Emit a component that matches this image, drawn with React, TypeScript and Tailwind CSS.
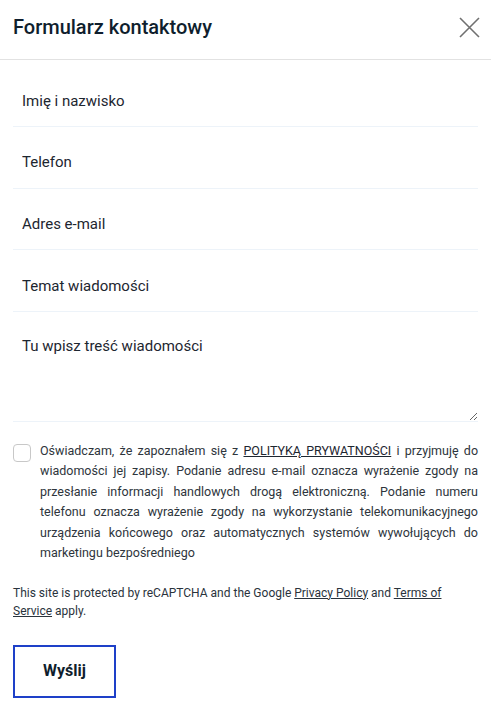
import React from "react";

const fields = ["Imię i nazwisko", "Telefon", "Adres e-mail", "Temat wiadomości"];

export default function App() {
  return (
    <div className="w-[491px] min-h-[701px] bg-white" style={{ fontFamily: "Roboto, 'Liberation Sans', sans-serif" }}>
      <div className="flex h-[60px] items-center justify-between border-b border-[#e2e2e2] pb-[5px] pl-[13px] pr-[10px]">
        <h1 className="text-[20px] font-medium text-[#0f1e2d] leading-none">Formularz kontaktowy</h1>
        <button className="flex h-[24px] w-[24px] items-center justify-center text-[#707070]">
          <svg width="21" height="21" viewBox="0 0 21 21" fill="none" stroke="currentColor" strokeWidth="1.6">
            <path d="M1 1L20 20M20 1L1 20" />
          </svg>
        </button>
      </div>
      <div className="flex flex-col px-[13px] pt-[15px]">
        <div className="flex flex-col gap-[9.7px]">
          {fields.map((f) => (
            <input
              key={f}
              placeholder={f}
              className="h-[52px] w-full border-b border-[#edf3f9] pl-[9px] text-[15px] text-[#1d2630] placeholder:text-[#1d2630] outline-none"
            />
          ))}
          <textarea
            placeholder="Tu wpisz treść wiadomości"
            className="h-[100px] w-full border-b border-[#edf3f9] pl-[9px] pt-[15px] text-[15px] leading-[19px] text-[#1d2630] placeholder:text-[#1d2630] outline-none"
          />
        </div>
        <div className="mt-[19px] flex items-start gap-[9px]">
          <span className="mt-[3px] h-[18px] w-[18px] shrink-0 rounded-[4px] border border-[#c8c8c8] bg-white" />
          <p className="text-justify text-[12.5px] leading-[20.5px] text-[#2e353c]">
            Oświadczam, że zapoznałem się z <a className="underline text-[#1d2630]">POLITYKĄ PRYWATNOŚCI</a> i przyjmuję do wiadomości jej zapisy. Podanie adresu e-mail oznacza wyrażenie zgody na przesłanie informacji handlowych drogą elektroniczną. Podanie numeru telefonu oznacza wyrażenie zgody na wykorzystanie telekomunikacyjnego urządzenia końcowego oraz automatycznych systemów wywołujących do marketingu bezpośredniego
          </p>
        </div>
        <p className="mt-[20px] pr-[30px] text-[12px] leading-[18.5px] text-[#2a333c]">
          This site is protected by reCAPTCHA and the Google <a className="underline">Privacy Policy</a> and <a className="underline">Terms of Service</a> apply.
        </p>
        <div className="mt-[24px]">
          <button className="flex h-[53px] w-[103px] items-center justify-center border-2 border-[#1e40c8] text-[16px] font-bold text-[#0f1e2d]">
            Wyślij
          </button>
        </div>
      </div>
    </div>
  );
}
